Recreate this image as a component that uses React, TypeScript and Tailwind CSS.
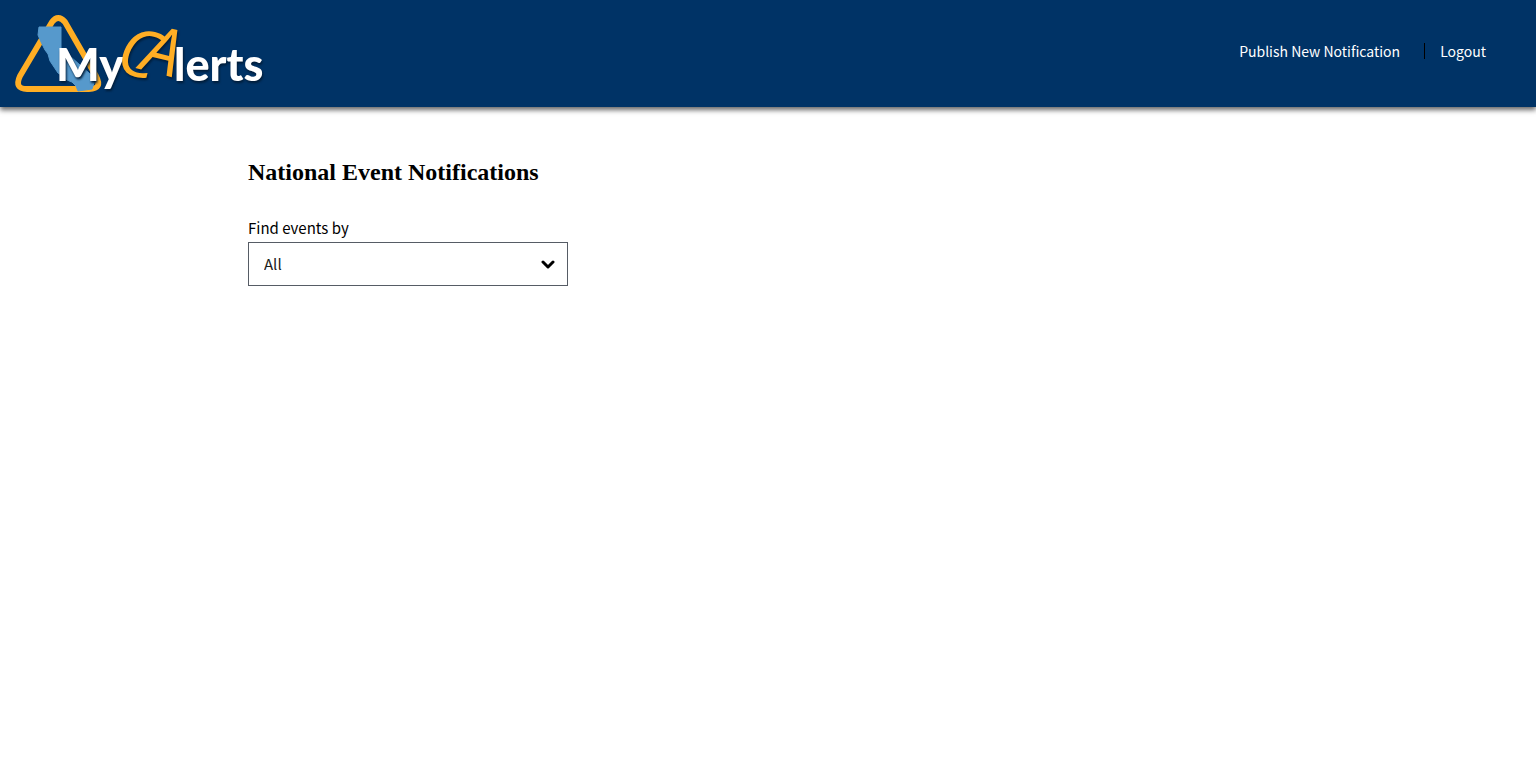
import React from "react";

const sans = "font-['Noto_Sans_CJK_SC',sans-serif]";

function Logo() {
  return (
    <svg
      width="270"
      height="107"
      viewBox="0 0 270 107"
      role="img"
      aria-label="MyCAlerts"
      className="block"
    >
      <path
        d="M52 22 L20 76 Q14 89 27 89 H89 Q103 89 96 76 L65 22 Q58 14 52 22 Z"
        fill="none"
        stroke="#ffae24"
        strokeWidth="5.8"
        strokeLinejoin="round"
      />
      <path
        d="M39 27 H61 V48 L90 74 L93 78 L94 83 L92 89 L78 91 L76 86 L72 82 L67 80 L63 76 L58 73 L54 67 L50 61 L48 54 L45 50 L41 42 L38 35 Z"
        fill="#5699cc"
        stroke="#5699cc"
        strokeLinejoin="round"
      />
      <text
        y="81"
        fontSize="46"
        fill="#ffffff"
        className="font-['Lato',sans-serif] font-black [filter:drop-shadow(1px_2px_1px_#001c38)]"
      >
        <tspan x="56">My</tspan>
        <tspan
          x="114"
          y="71"
          rotate="14"
          fontSize="66"
          fill="#ffae24"
          className="font-['Open_Sans',sans-serif] font-medium italic"
        >
          C
        </tspan>
        <tspan
          x="139"
          y="69"
          rotate="14"
          fontSize="66"
          fill="#ffae24"
          className="font-['Open_Sans',sans-serif] font-medium italic"
        >
          A
        </tspan>
        <tspan x="174" y="81" rotate="0" fontSize="45">
          lerts
        </tspan>
      </text>
    </svg>
  );
}

export default function App() {
  return (
    <div className={`${sans} min-h-screen bg-white text-black`}>
      <header className="flex items-start justify-between bg-[#003366] shadow-[0_3px_5px_rgba(0,0,0,0.6)]">
        <a href="#home">
          <Logo />
        </a>
        <nav className="flex items-center pt-10 pr-[50px] text-sm leading-6 text-white">
          <a href="#publish" className="leading-[22px]">
            Publish New Notification
          </a>
          <span className="ml-6 h-4 w-px bg-black" />
          <a href="#logout" className="ml-[15px] leading-[22px]">
            Logout
          </a>
        </nav>
      </header>
      <main className="mx-auto max-w-[1040px] pt-[49px]">
        <h1 className="font-['Liberation_Serif',serif] text-2xl leading-8 font-bold">
          National Event Notifications
        </h1>
        <label htmlFor="filter" className="mt-7 block text-[15px] leading-6">
          Find events by
        </label>
        <div className="mt-0.5 grid w-80 items-center">
          <select
            id="filter"
            className="col-start-1 row-start-1 h-11 w-full appearance-none border border-[#565c65] bg-white px-[15px] text-[15px] text-[#1b1b1b]"
          >
            <option>All</option>
          </select>
          <svg
            width="14"
            height="10"
            viewBox="0 0 14 10"
            fill="none"
            stroke="#000000"
            strokeWidth="3"
            strokeLinecap="round"
            strokeLinejoin="round"
            aria-hidden="true"
            className="pointer-events-none col-start-1 row-start-1 mr-[13px] justify-self-end"
          >
            <path d="M2 3 L7 8 L12 3" />
          </svg>
        </div>
      </main>
    </div>
  );
}
